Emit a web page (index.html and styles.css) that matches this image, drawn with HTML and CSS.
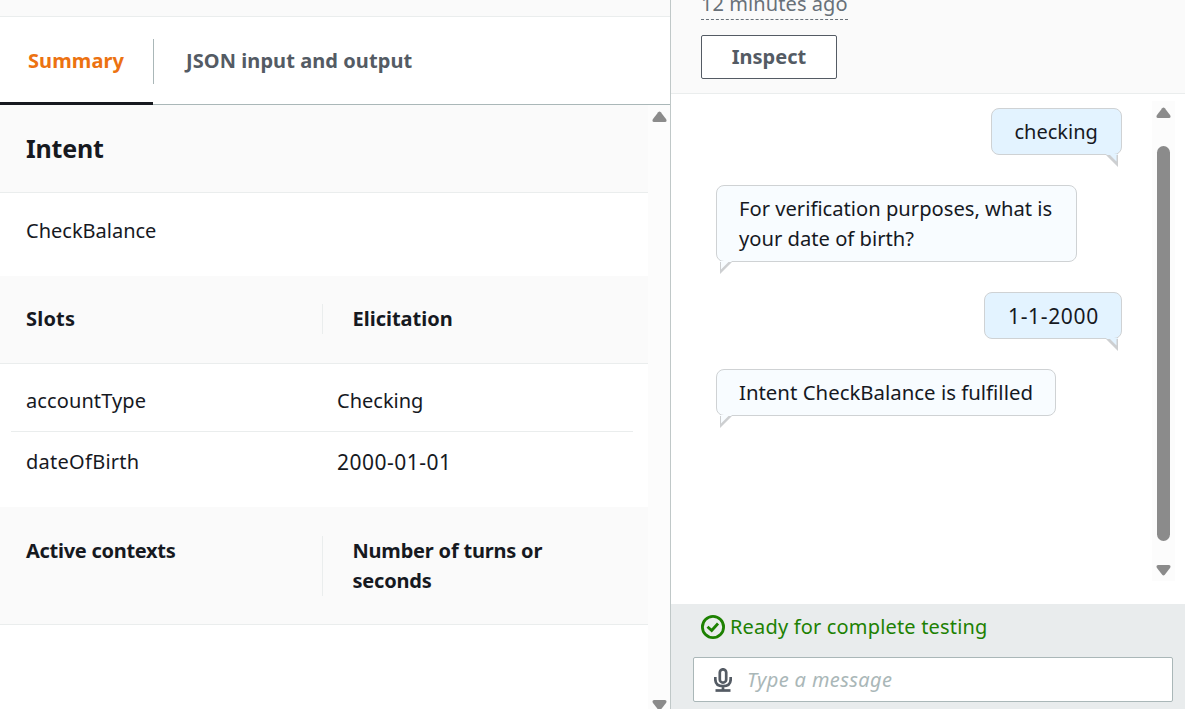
FILE: index.html
```html
<!DOCTYPE html>
<html lang="en">
<head>
<meta charset="utf-8">
<title>Test bot</title>
<link rel="stylesheet" href="styles.css">
</head>
<body>
<div class="app">
  <section class="details">
    <div class="details-top"></div>
    <nav class="tabs">
      <a class="tab tab-active"><span class="t-summary">Summary</span></a>
      <a class="tab"><span class="t-json">JSON input and output</span></a>
    </nav>
    <div class="details-body">
      <div class="content">
        <header class="intent-head"><h2 class="t-intent">Intent</h2></header>
        <div class="intent-name"><span class="t-name">CheckBalance</span></div>
        <header class="cols-head">
          <h3 class="col-a t-slots">Slots</h3>
          <h3 class="col-b t-elic">Elicitation</h3>
        </header>
        <div class="rows">
          <div class="row"><span class="cell-a t-acct">accountType</span><span class="t-chk">Checking</span></div>
          <div class="row"><span class="cell-a t-dob">dateOfBirth</span><span class="t-date">2000-01-01</span></div>
        </div>
        <header class="cols-head">
          <h3 class="col-a t-active">Active contexts</h3>
          <h3 class="col-b t-turns">Number of turns or<br>seconds</h3>
        </header>
      </div>
      <div class="bar bar-left">
        <svg class="arrow" viewBox="0 0 15 11"><path d="M6.200 1.300Q7.500-.3 8.800 1.300L14.200 8.300Q15.200 10.800 13 11H2Q-.2 10.800.8 8.300Z"/></svg>
        <svg class="arrow" viewBox="0 0 15 11"><path d="M6.200 9.700Q7.500 11.300 8.800 9.700L14.200 2.700Q15.200.2 13 0H2Q-.2.2.8 2.700Z"/></svg>
      </div>
    </div>
  </section>
  <section class="chat">
    <header class="chat-head">
      <span class="ago t-ago">12 minutes ago</span>
      <button class="inspect"><span class="t-inspect">Inspect</span></button>
    </header>
    <div class="chat-body">
      <div class="messages">
        <div class="bubble mine t-m1"><span>checking</span>
          <svg class="tail" viewBox="0 0 13 13"><path class="tail-fill" d="M0 0H12V12Z"/><path class="tail-edge" d="M0 1H4L10.500 7.500V1H12V13Z"/></svg></div>
        <div class="bubble bot t-m2"><span>For verification purposes, what is<br>your date of birth?</span>
          <svg class="tail" viewBox="0 0 13 13"><path class="tail-fill" d="M13 0H1V12Z"/><path class="tail-edge" d="M13 1H9.500L2 8.500V1H1V13Z"/></svg></div>
        <div class="bubble mine t-m3"><span>1-1-2000</span>
          <svg class="tail" viewBox="0 0 13 13"><path class="tail-fill" d="M0 0H12V12Z"/><path class="tail-edge" d="M0 1H4L10.500 7.500V1H12V13Z"/></svg></div>
        <div class="bubble bot t-m4"><span>Intent CheckBalance is fulfilled</span>
          <svg class="tail" viewBox="0 0 13 13"><path class="tail-fill" d="M13 0H1V12Z"/><path class="tail-edge" d="M13 1H9.500L2 8.500V1H1V13Z"/></svg></div>
      </div>
      <div class="bar bar-chat">
        <svg class="arrow" viewBox="0 0 15 11"><path d="M6.200 1.300Q7.500-.3 8.800 1.300L14.200 8.300Q15.200 10.800 13 11H2Q-.2 10.800.8 8.300Z"/></svg>
        <div class="thumb"></div>
        <svg class="arrow" viewBox="0 0 15 11"><path d="M6.200 9.700Q7.500 11.300 8.800 9.700L14.200 2.700Q15.200.2 13 0H2Q-.2.2.8 2.700Z"/></svg>
      </div>
    </div>
    <footer class="chat-foot">
      <div class="status">
        <svg class="check" viewBox="0 0 24 24"><circle cx="12" cy="12" r="10.600"/><path d="M6.500 11.700L10.700 15.500L17 8.500"/></svg>
        <span class="t-ready">Ready for complete testing</span>
      </div>
      <div class="field">
        <svg class="mic" viewBox="0 0 18 24"><rect x="5.800" y="1.300" width="6.400" height="13.300" rx="3.200"/><path d="M1.300 9V11C1.300 16 4.500 18.200 9 18.200S16.700 16 16.700 11V9M9 18.200V22"/><path d="M1.500 22.500H16.500"/></svg>
        <span class="placeholder t-type">Type a message</span>
      </div>
    </footer>
  </section>
</div>
</body>
</html>
```
FILE: styles.css
```css
* { box-sizing: border-box; }
body {
  margin: 0;
  font: 20px/30px "Noto Sans", sans-serif;
  color: #16191f;
  background: #fff;
}
h2, h3 { margin: 0; font-size: inherit; }
span, h2, h3 { white-space: nowrap; }
svg { display: block; flex: none; }
.app { display: flex; width: 1185px; height: 709px; overflow: hidden; }

.details { width: 671px; display: flex; flex-direction: column; border-right: 1px solid #c0c8c8; }
.details-top { height: 17px; background: #fafafa; border-bottom: 1px solid #eaeded; }
.tabs { height: 88px; display: flex; border-bottom: 1px solid #aab7b8; }
.tab { height: 88px; padding: 29px 0 0 32px; font-weight: 700; color: #545b64; }
.tab-active {
  width: 154px; padding-left: 28px; color: #ec7211;
  background:
    linear-gradient(#16191f, #16191f) 0 85px / 153px 3px no-repeat,
    linear-gradient(#aab7b8, #aab7b8) 153px 22px / 1px 45px no-repeat;
}
.details-body { flex: 1; display: flex; min-height: 0; }
.content { width: 648px; }
.intent-head { height: 88px; padding: 28px 26px; background: #fafafa; border-bottom: 1px solid #eaeded; }
.intent-name { height: 83px; padding: 23px 26px; }
.cols-head { display: flex; padding: 28px 0 29px 26px; background: #fafafa; border-bottom: 1px solid #eaeded; }
.cols-head:last-child { padding-top: 29px; padding-bottom: 28px; }
.col-a { width: 296px; }
.col-b { padding-left: 29.500px; border-left: 1px solid #eaeded; }
.rows { height: 143px; padding: 7px 15px 0 11px; }
.row { height: 61px; display: flex; padding: 15px; }
.row:first-child { height: 60px; }
.row + .row { border-top: 1px solid #eaeded; }
.cell-a { width: 311px; }

.bar { display: flex; flex-direction: column; align-items: center; background: #fcfcfc; }
.bar-left { width: 22px; height: 606px; padding: 6px 0 0; justify-content: space-between; }
.arrow { width: 15px; height: 11px; fill: #8b8b8b; }

.chat { flex: 1; display: flex; flex-direction: column; }
.chat-head { height: 94px; position: relative; padding: 35px 30px 0; background: #fafafa; border-bottom: 1px solid #eaeded; }
.ago { position: absolute; left: 30px; top: -11px; width: 147px; height: 31px; color: #687078; border-bottom: 1px dashed #687078; }
.inspect { width: 136px; height: 44px; padding: 0; font: inherit; font-weight: 700; color: #545b64; background: #fff; border: 1px solid #545b64; border-radius: 2px; }
.chat-body { height: 510px; display: flex; }
.messages { width: 481px; padding: 14px 30px 0 45px; display: flex; flex-direction: column; gap: 30px; }
.bubble { position: relative; height: 47px; padding: 8px 22px 7px; border: 1px solid #cfd2d4; border-radius: 8px; }
.mine { align-self: flex-end; background: #e3f3ff; }
.bot { align-self: flex-start; padding-top: 7px; background: #f8fcff; }
.tail { position: absolute; bottom: -13px; width: 13px; height: 13px; }
.mine .tail { right: 2px; }
.bot .tail { left: 2px; }
.tail-edge { fill: #cdcfd1; }
.mine .tail-fill { fill: #e3f3ff; }
.bot .tail-fill { fill: #f8fcff; }
.bar-chat { width: 23px; height: 480px; margin-top: 7px; padding: 6px 0 5px; }
.thumb { width: 13px; height: 395px; margin: 28px 0 24px; border-radius: 7px; background: #8b8b8b; }

.chat-foot { flex: 1; padding: 8px 12px 0 22px; background: #e9eced; }
.status { height: 30px; display: flex; align-items: center; padding-left: 8px; gap: 5px; color: #1d8102; }
.check { width: 24px; height: 24px; fill: none; stroke: #1d8102; stroke-width: 2.800; }
.field { height: 45px; margin-top: 15px; padding-left: 20px; display: flex; align-items: center; gap: 15px; background: #fff; border: 1px solid #aab7b8; border-radius: 2px; }
.mic { width: 18px; height: 24px; fill: none; stroke: #545b64; stroke-width: 2.700; }
.placeholder { font-style: italic; color: #aab7b8; }

/* Per-label size and tracking */
.t-intent { font-size: 25px; letter-spacing: -.2px; }
.t-summary { letter-spacing: .1px; }
.t-json { letter-spacing: .07px; }
.t-slots { letter-spacing: .2px; }
.t-acct { letter-spacing: .1px; }
.t-dob { letter-spacing: .27px; }
.t-date { font-size: 21px; letter-spacing: .5px; }
.t-active { letter-spacing: -.28px; }
.t-turns { letter-spacing: -.2px; }
.t-ago { letter-spacing: .08px; }
.t-m1 { width: 131px; padding-left: 22.500px; }
.t-m2 { width: 361px; height: 77px; font-size: 20.180px; }
.t-m3 { width: 138px; padding-left: 23px; font-size: 21px; letter-spacing: .65px; }
.t-m4 { width: 340px; font-size: 20.400px; }
.t-ready { letter-spacing: .17px; }
.t-type { letter-spacing: .38px; }
```
